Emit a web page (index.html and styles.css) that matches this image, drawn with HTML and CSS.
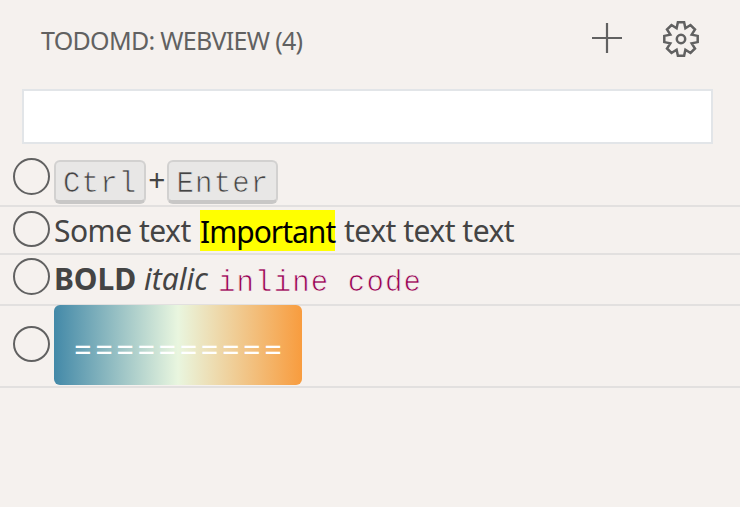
FILE: index.html
```
<!DOCTYPE html>
<html lang="en">
<head>
<meta charset="utf-8">
<title>TodoMD</title>
<link rel="stylesheet" href="styles.css">
</head>
<body>
<header class="header">
  <h1 class="title">TODOMD: WEBVIEW (4)</h1>
  <svg class="icon-add" viewBox="0 0 30 30"><path d="M15 0V30M0 15H30"/></svg>
  <svg class="icon-gear" viewBox="0 0 36 36"><path d="M14.9 1.3H21.1L22.4 7.3L27.5 4L32 8.5L28.7 13.6L34.7 14.9V21.1L28.7 22.4L32 27.5L27.5 32L22.4 28.7L21.1 34.7H14.9L13.6 28.7L8.5 32L4 27.5L7.3 22.4L1.3 21.1V14.9L7.3 13.6L4 8.5L8.5 4L13.6 7.3Z"/><circle cx="18" cy="18" r="4.2"/></svg>
</header>
<input class="filter" type="text" aria-label="Filter">
<main class="list">
  <div class="row row-keys"><span class="check"></span><div class="content"><kbd>Ctrl</kbd><span class="plus">+</span><kbd>Enter</kbd></div></div>
  <div class="row row-mark"><span class="check"></span><div class="content"><span class="some">Some text</span><mark>Important</mark><span class="rest">text text text</span></div></div>
  <div class="row row-format"><span class="check"></span><div class="content"><strong>BOLD</strong><em>italic</em><code>inline code</code></div></div>
  <div class="row row-gradient"><span class="check"></span><div class="gradient">==========</div></div>
</main>
</body>
</html>
```
FILE: styles.css
```
* { box-sizing: border-box; }
body {
  margin: 0;
  background: #f5f1ee;
  color: #444;
  font-family: "Noto Sans", sans-serif;
  font-size: 30px;
  line-height: 40px;
}
.header {
  display: flex;
  height: 89px;
  padding: 21px 41px 0;
  color: #616161;
}
.title {
  flex: 1;
  margin: -1px 0 0;
  font-size: 25px;
  font-weight: 400;
  letter-spacing: -0.7px;
  white-space: nowrap;
}
.header svg {
  fill: none;
  stroke: #616161;
  stroke-width: 2.2;
}
.icon-add { width: 30px; height: 30px; margin: 2px 41px 0 0; }
.icon-gear { width: 36px; height: 36px; }
.icon-gear path { stroke-width: 2.5; }
.icon-gear circle { stroke-width: 2.5; }
.filter {
  display: block;
  width: 691px;
  height: 55px;
  margin: 0 0 11px 22px;
  border: 2px solid #e2e5e8;
  background: #fff;
}
.row {
  display: flex;
  align-items: flex-start;
  padding-left: 13px;
  border-bottom: 2px solid #e2e0df;
}
.row-keys { height: 52px; }
.row-mark { height: 48px; }
.row-format { height: 51px; }
.row-gradient { height: 82px; }
.check {
  flex: none;
  width: 37px;
  height: 37px;
  margin: 3px 4px 0 0;
  border: 2px solid #616161;
  border-radius: 50%;
}
.row-mark .check { height: 36px; margin-top: 4px; }
.row-gradient .check { height: 36px; margin-top: 20px; }
.content { display: flex; white-space: pre; }
kbd, code {
  font-family: "Liberation Mono", monospace;
  font-size: 29px;
  letter-spacing: 1.15px;
  -webkit-text-stroke: 0.7px #f5f1ee;
}
kbd {
  height: 44px;
  margin-top: 5px;
  padding: 3px 7px 0;
  border: 2px solid #d2d1d0;
  border-bottom: 4px solid #c8c7c6;
  border-radius: 6px;
  background: #e8e7e6;
  letter-spacing: 1.2px;
  -webkit-text-stroke-color: #e8e7e6;
}
.plus { width: 21px; text-align: center; margin-top: 5px; }
.some { width: 146px; margin-top: 4px; letter-spacing: -0.5px; }
mark {
  width: 135px;
  height: 41px;
  margin-top: 3px;
  padding-top: 2px;
  background: #ff0;
  color: #000;
  letter-spacing: -1px;
}
.rest { margin: 4px 0 0 9px; letter-spacing: -0.5px; }
strong { width: 90px; margin-top: 4px; letter-spacing: -0.1px; }
em { width: 74px; margin-top: 4px; }
code { margin-top: 9px; color: #980052; }
.gradient {
  width: 248px;
  height: 80px;
  margin-top: -1px;
  padding: 24px 0 0 20px;
  border-radius: 6px;
  background: linear-gradient(90deg, #4389a8, #e9f6df 50%, #f89c3e);
  color: #fff;
  font-size: 31px;
  letter-spacing: 3.4px;
}
```
